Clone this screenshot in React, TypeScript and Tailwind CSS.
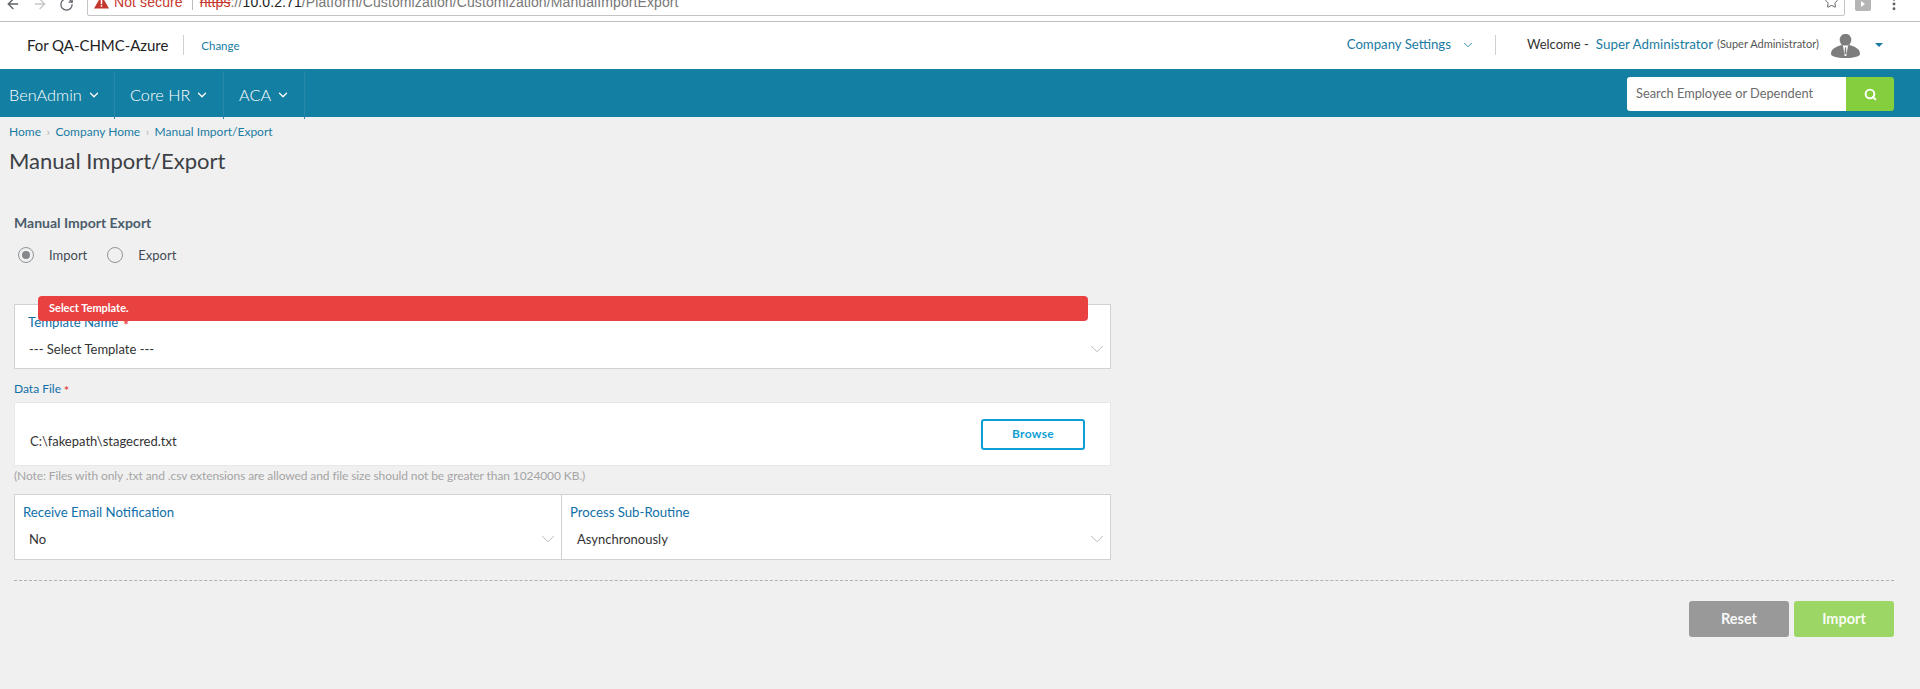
import React from 'react';
import { ArrowLeft, ArrowRight, ChevronDown, EllipsisVertical, RotateCw, Search, Star } from 'lucide-react';

const SelectField = ({ label, value, required = false, labelPad = 'pl-[8px]', valuePad = 'pl-[14px]', width = 'flex-1' }: { label: string; value: string; required?: boolean; labelPad?: string; valuePad?: string; width?: string }) => (
  <div className={`${width} h-full flex flex-col bg-white relative`}>
    <div className={`${labelPad} pt-[8px] text-[13.2px] leading-[18px] text-[#0f6fa8]`}>
      {label}
      {required && <span className="relative top-[3px] text-[#e94040] font-bold ml-[5px]">*</span>}
    </div>
    <div className={`${valuePad} mt-[9px] h-[18px] text-[13px] leading-[18px] text-[#333] flex items-center justify-between pr-[2px]`}>
      <span>{value}</span>
      <ChevronDown className="w-[22px] h-[22px] text-[#a5aaaf]" strokeWidth={0.9} />
    </div>
  </div>
);

const NavItem = ({ label, width, first = false }: { label: string; width: string; first?: boolean }) => (
  <div className={`${width} ${first ? 'pl-[9px]' : 'pl-[15px]'} h-[48px] mt-[2px] flex items-center gap-[5px] border-r border-[#2b88a8] text-[16.3px] font-light text-white`}>
    <span>{label}</span>
    <ChevronDown className="w-[14px] h-[14px]" strokeWidth={2.2} />
  </div>
);

export default function App() {
  return (
    <div className="w-[1920px] h-[689px] overflow-hidden bg-[#f0f0f0] font-['Lato',sans-serif]">
      {/* browser bar, cut off at the top */}
      <div className="h-[22px] bg-white border-b border-[#bdbdbd] overflow-hidden flex items-start">
        <div className="w-[87px] flex items-center gap-[11px] pl-[5px] h-[8px] text-[#5f6368]">
          <ArrowLeft className="w-[16px] h-[16px] shrink-0" strokeWidth={2} />
          <ArrowRight className="w-[16px] h-[16px] shrink-0 text-[#c8c8c8]" strokeWidth={2} />
          <RotateCw className="w-[15px] h-[15px] shrink-0" strokeWidth={2} />
        </div>
        <div className="w-[1758px] h-[17px] -mt-px bg-white border border-[#c4c4c4] rounded-b-[2px] flex items-center pl-[6px] pr-[5px] font-['Liberation_Sans',sans-serif] text-[14px] tracking-[0.1px] relative">
          <div className="flex items-center -mt-[11px] whitespace-nowrap">
            <svg viewBox="0 0 16 14" className="w-[15px] h-[14px] mr-[5px]">
              <path d="M8 0 16 14H0Z" fill="#c5372c" />
              <path d="M7.2 4.5h1.6v5H7.2zM7.2 10.5h1.6V12H7.2z" fill="#fff" />
            </svg>
            <span className="text-[#c5372c]">Not secure</span>
            <span className="w-px h-[16px] bg-[#bbb] ml-[9px] mr-[7px]" />
            <span className="text-[#c5372c] line-through">https</span>
            <span className="text-[#777]">://</span>
            <span className="text-[#222]">10.0.2.71</span>
            <span className="text-[#777]">/Platform/Customization/Customization/ManualImportExport</span>
          </div>
          <Star className="w-[15px] h-[15px] ml-auto -mt-[12px] text-[#5f6368]" strokeWidth={1.6} />
        </div>
        <div className="flex-1 flex items-start pl-[10px] gap-[15px] -mt-[4px]">
          <div className="w-[16px] h-[15px] bg-[#b5b5b5] rounded-[2px] flex items-center justify-center">
            <div className="w-0 h-0 border-y-[3px] border-y-transparent border-l-[4px] border-l-white" />
          </div>
          <EllipsisVertical className="w-[16px] h-[16px] text-[#5f6368]" strokeWidth={2.4} />
        </div>
      </div>

      {/* company header */}
      <header className="h-[47px] bg-white flex items-center">
        <span className="ml-[27px] text-[15px] tracking-[-0.05px] text-[#222] -mt-[1px]">For QA-CHMC-Azure</span>
        <span className="ml-[15px] w-px h-[20px] bg-[#d0d0d0] -mt-[2px]" />
        <span className="ml-[17px] text-[11.5px] text-[#1a7ba3] mt-[1px]">Change</span>
        <div className="ml-auto flex items-center -mt-[2px]">
          <span className="text-[13.2px] text-[#1a7ba3]">Company Settings</span>
          <ChevronDown className="ml-[10px] w-[14px] h-[14px] text-[#1a7ba3]" strokeWidth={1.5} />
          <span className="ml-[20px] w-px h-[20px] bg-[#d0d0d0]" />
          <span className="ml-[31px] text-[13px] text-[#333]">Welcome -</span>
          <span className="ml-[7px] text-[13.4px] text-[#1a7ba3]">Super Administrator</span>
          <span className="ml-[4px] text-[11px] text-[#555]">(Super Administrator)</span>
          <svg viewBox="0 0 29 24" className="ml-[12px] w-[29px] h-[24px] mt-[2px]">
            <ellipse cx="14.5" cy="6" rx="5.8" ry="6.2" fill="#7d7d7d" />
            <path d="M0 20c0-5 4-7 10.5-9l4 1.5 4-1.5C25 13 29 15 29 20c0 2-5 4-14.5 4S0 22 0 20Z" fill="#7d7d7d" />
            <path d="M12 11.5h5L15.3 22h-1.6Z" fill="#fff" />
            <path d="M14 13.2h1l.5 6-1 1.4-1-1.4Z" fill="#7d7d7d" />
          </svg>
          <span className="ml-[15px] mr-[37px] w-0 h-0 border-x-[4px] border-x-transparent border-t-[4px] border-t-[#1a7ba3]" />
        </div>
      </header>

      {/* main nav */}
      <nav className="h-[48px] bg-[#137fa2] flex items-start">
        <NavItem label="BenAdmin" width="w-[115px]" first />
        <NavItem label="Core HR" width="w-[109px]" />
        <NavItem label="ACA" width="w-[81px]" />
        <div className="ml-auto mr-[26px] mt-[8px] flex h-[34px]">
          <div className="w-[219px] bg-white rounded-l-[3px] pl-[9px] flex items-center text-[12.8px] text-[#6b6b6b]">
            Search Employee or Dependent
          </div>
          <div className="w-[48px] bg-[#85cf3e] rounded-r-[3px] flex items-center justify-center">
            <Search className="w-[13px] h-[13px] text-white" strokeWidth={3.6} />
          </div>
        </div>
      </nav>

      <main className="relative">
        <div className="pl-[9px] pt-[7px] flex items-center h-[23px] text-[12px] text-[#1a7ba3]">
          <span>Home</span>
          <span className="mx-[5.5px] text-[#b5b5b5]">›</span>
          <span>Company Home</span>
          <span className="mx-[5.5px] text-[#b5b5b5]">›</span>
          <span>Manual Import/Export</span>
        </div>
        <h1 className="pl-[9px] mt-[7px] text-[22px] leading-[28px] font-normal text-[#3c3f45]">Manual Import/Export</h1>

        <div className="pl-[14px] pr-[26px]">
          <div className="mt-[39px] text-[14px] leading-[18px] font-bold text-[#4b5d6b]">Manual Import Export</div>
          <div className="mt-[14px] ml-[4px] flex items-center text-[13px] leading-[18px] text-[#444b55]">
            <span className="w-[16px] h-[16px] rounded-full border border-[#8f9499] flex items-center justify-center">
              <span className="w-[8px] h-[8px] rounded-full bg-[#85898d]" />
            </span>
            <span className="ml-[15px]">Import</span>
            <span className="ml-[20px] w-[16px] h-[16px] rounded-full border border-[#8f9499]" />
            <span className="ml-[15px]">Export</span>
          </div>

          <div className="w-[1097px] relative mt-[40px]">
            <div className="absolute left-[24px] -top-[8px] w-[1050px] h-[25px] z-10 bg-[#e94040] rounded-[4px] pl-[11px] flex items-center text-[11px] font-bold text-white">
              Select Template.
            </div>
            <div className="h-[65px] border border-[#d2d2d2] flex">
              <SelectField label="Template Name" value="--- Select Template ---" required labelPad="pl-[13px]" />
            </div>

            <div className="mt-[12px] text-[12px] leading-[16px] text-[#0f6fa8]">
              Data File<span className="relative top-[2px] text-[#e94040] font-bold ml-[3px]">*</span>
            </div>
            <div className="mt-[5px] h-[64px] bg-white border border-[#e8e8e8] flex items-center justify-between pl-[15px] pr-[25px]">
              <span className="text-[13px] text-[#333] mt-[16px]">C:\fakepath\stagecred.txt</span>
              <button className="w-[104px] h-[31px] border-2 border-[#0f9fd6] rounded-[3px] text-[12px] font-bold tracking-[0.3px] text-[#0f9fd6] bg-white">
                Browse
              </button>
            </div>
            <div className="mt-[2px] text-[12px] leading-[16px] tracking-[-0.1px] text-[#a5a5a5]">
              (Note: Files with only .txt and .csv extensions are allowed and file size should not be greater than 1024000 KB.)
            </div>

            <div className="mt-[10px] h-[66px] border border-[#d2d2d2] flex">
              <SelectField label="Receive Email Notification" value="No" width="w-[546px] shrink-0" />
              <div className="w-px bg-[#d2d2d2]" />
              <SelectField label="Process Sub-Routine" value="Asynchronously" valuePad="pl-[15px]" />
            </div>
          </div>

          <div className="mt-[20px] border-t border-dashed border-[#b0b0b0]" />
          <div className="mt-[20px] flex justify-end gap-[5px]">
            <button className="w-[100px] h-[36px] rounded-[3px] bg-[#999999] text-[14.5px] font-bold text-white/95">Reset</button>
            <button className="w-[100px] h-[36px] rounded-[3px] bg-[#9cd765] text-[14.5px] font-bold text-white/95">Import</button>
          </div>
        </div>
      </main>
    </div>
  );
}
